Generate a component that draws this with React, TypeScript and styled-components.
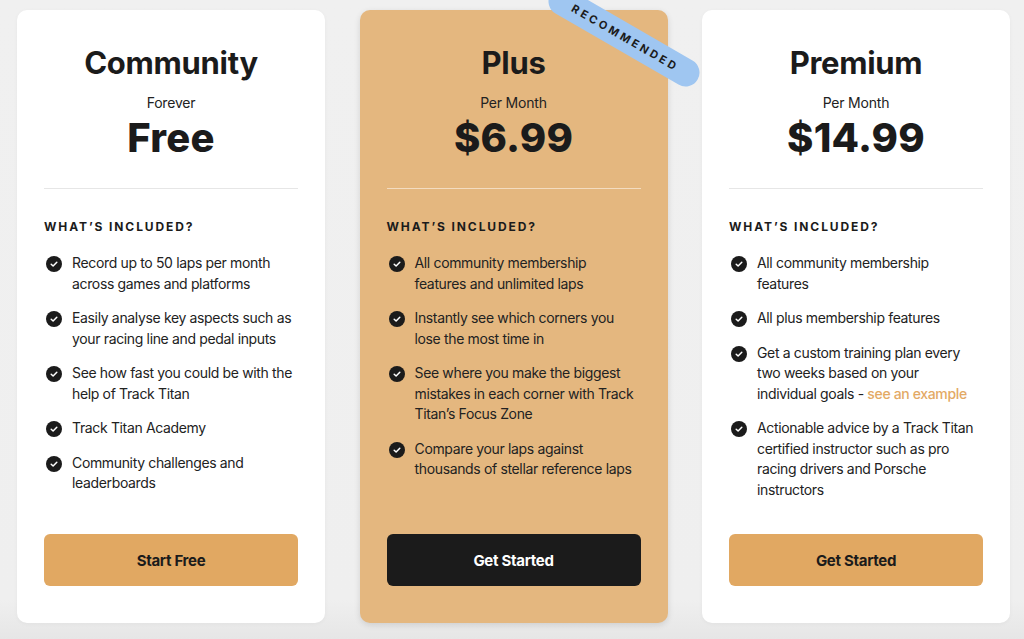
import React from "react";
import styled, { createGlobalStyle } from "styled-components";

const GlobalStyle = createGlobalStyle`
  html, body {
    margin: 0;
    padding: 0;
  }
  body {
    background: linear-gradient(to bottom, #f0f0f0 0, #efefef 600px, #e6e6e6 639px);
    min-height: 639px;
    font-family: Inter, "Noto Sans", "Liberation Sans", sans-serif;
    color: #1b1b1b;
    overflow: hidden;
  }
`;

const Page = styled.div`
  display: flex;
  gap: 34.5px;
  padding: 10px 0 0 17px;
  height: 639px;
  box-sizing: border-box;
`;

const Card = styled.div<{ $featured?: boolean }>`
  position: relative;
  width: 308px;
  height: 613px;
  box-sizing: border-box;
  padding: 33px 27px 37px;
  border-radius: 10px;
  background: ${(p) => (p.$featured ? "#e4b77f" : "#ffffff")};
  box-shadow: ${(p) =>
    p.$featured
      ? "0 2px 6px rgba(0,0,0,0.12)"
      : "0 1px 4px rgba(0,0,0,0.04)"};
  display: flex;
  flex-direction: column;
`;

const Title = styled.h2`
  margin: 0;
  font-size: 31px;
  line-height: 40px;
  font-weight: 700;
  text-align: center;
  letter-spacing: -0.3px;
`;

const Period = styled.div`
  margin-top: 10px;
  font-size: 14px;
  line-height: 20px;
  text-align: center;
  color: #222;
  letter-spacing: -0.2px;
`;

const Price = styled.div`
  font-size: 40px;
  line-height: 50px;
  font-weight: 800;
  text-align: center;
  letter-spacing: 0.2px;
`;

const Divider = styled.hr<{ $featured?: boolean }>`
  margin: 25px 0 0;
  border: none;
  height: 1px;
  background: ${(p) => (p.$featured ? "#f3dcc0" : "#e6e6e6")};
`;

const SectionLabel = styled.div`
  margin-top: 30px;
  font-size: 12px;
  line-height: 16px;
  font-weight: 700;
  letter-spacing: 1.9px;
  text-transform: uppercase;
`;

const List = styled.ul`
  list-style: none;
  margin: 18px 0 0;
  padding: 0 0 0 2px;
  display: flex;
  flex-direction: column;
  gap: 14px;
`;

const Item = styled.li`
  display: flex;
  align-items: flex-start;
  gap: 10px;
  font-size: 14px;
  line-height: 20.5px;
  color: #222;
  letter-spacing: -0.35px;
`;

const IconWrap = styled.span`
  flex: 0 0 16px;
  height: 16px;
  margin-top: 3px;
  display: flex;
`;

const ItemText = styled.span`
  flex: 1;
`;

const Link = styled.a`
  color: #e3a965;
  font-weight: 500;
  text-decoration: none;
`;

const Button = styled.button<{ $dark?: boolean }>`
  margin-top: auto;
  height: 52px;
  width: 100%;
  border: none;
  border-radius: 6px;
  background: ${(p) => (p.$dark ? "#1b1b1b" : "#e1a862")};
  color: ${(p) => (p.$dark ? "#ffffff" : "#1b1b1b")};
  font-family: Inter, "Noto Sans", "Liberation Sans", sans-serif;
  font-size: 15px;
  font-weight: 700;
  letter-spacing: -0.3px;
  cursor: pointer;
`;

const Ribbon = styled.div`
  position: absolute;
  left: 179px;
  top: 13px;
  width: 170px;
  height: 28px;
  border-radius: 14px;
  background: #9fc6f1;
  transform: rotate(30deg);
  display: flex;
  align-items: center;
  justify-content: center;
  font-size: 11px;
  font-weight: 700;
  letter-spacing: 3px;
  color: #1b1b1b;
  padding-left: 3px;
  box-sizing: border-box;
`;

const Check = () => (
  <svg width="16" height="16" viewBox="0 0 16 16">
    <circle cx="8" cy="8" r="8" fill="#1b1b1b" />
    <path
      d="M5.2 8.2 L7.1 10 L10.8 6.2"
      fill="none"
      stroke="#ffffff"
      strokeWidth="1.5"
      strokeLinecap="round"
      strokeLinejoin="round"
    />
  </svg>
);

type Plan = {
  name: string;
  period: string;
  price: string;
  features: React.ReactNode[];
  button: string;
  featured?: boolean;
  dark?: boolean;
};

const plans: Plan[] = [
  {
    name: "Community",
    period: "Forever",
    price: "Free",
    features: [
      "Record up to 50 laps per month across games and platforms",
      "Easily analyse key aspects such as your racing line and pedal inputs",
      "See how fast you could be with the help of Track Titan",
      "Track Titan Academy",
      "Community challenges and leaderboards",
    ],
    button: "Start Free",
  },
  {
    name: "Plus",
    period: "Per Month",
    price: "$6.99",
    features: [
      "All community membership features and unlimited laps",
      "Instantly see which corners you lose the most time in",
      "See where you make the biggest mistakes in each corner with Track Titan\u2019s Focus Zone",
      "Compare your laps against thousands of stellar reference laps",
    ],
    button: "Get Started",
    featured: true,
    dark: true,
  },
  {
    name: "Premium",
    period: "Per Month",
    price: "$14.99",
    features: [
      "All community membership features",
      "All plus membership features",
      <>
        {"Get a custom training plan every two weeks based on your"}
        <br />
        {"individual goals - "}
        <Link href="#">see an example</Link>
      </>,
      "Actionable advice by a Track Titan certified instructor such as pro racing drivers and Porsche instructors",
    ],
    button: "Get Started",
  },
];

export default function App() {
  return (
    <>
      <GlobalStyle />
      <Page>
        {plans.map((plan) => (
          <Card key={plan.name} $featured={plan.featured}>
            {plan.featured && <Ribbon>RECOMMENDED</Ribbon>}
            <Title>{plan.name}</Title>
            <Period>{plan.period}</Period>
            <Price>{plan.price}</Price>
            <Divider $featured={plan.featured} />
            <SectionLabel>{"What\u2019s included?"}</SectionLabel>
            <List>
              {plan.features.map((f, i) => (
                <Item key={i}>
                  <IconWrap>
                    <Check />
                  </IconWrap>
                  <ItemText>{f}</ItemText>
                </Item>
              ))}
            </List>
            <Button $dark={plan.dark}>{plan.button}</Button>
          </Card>
        ))}
      </Page>
    </>
  );
}
